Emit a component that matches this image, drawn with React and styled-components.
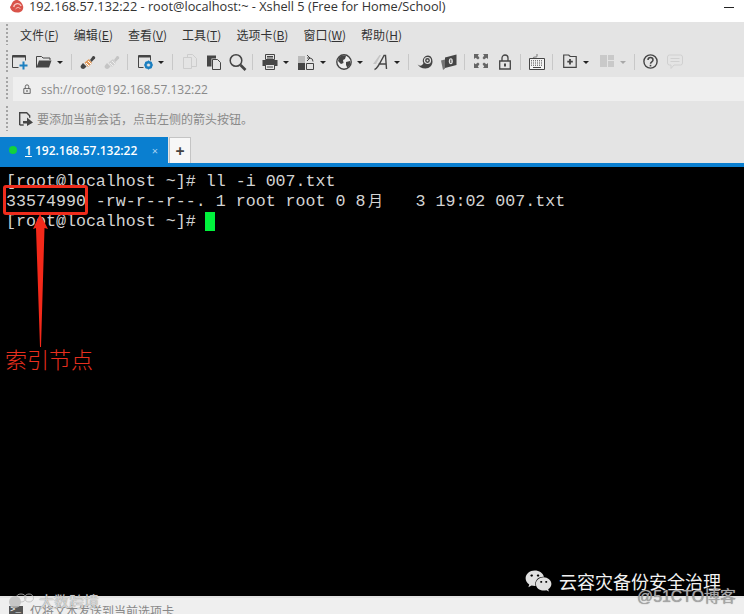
import React from 'react';
import styled, { createGlobalStyle } from 'styled-components';
import { FaWeixin } from 'react-icons/fa';

const ui = `"Open Sans", "Noto Sans CJK SC", sans-serif`;
const cjk = `"Noto Sans CJK SC", "Noto Sans", sans-serif`;
const ink = '#454545';
const blue = '#1b7fc0';

const Global = createGlobalStyle`
	html, body { margin: 0; padding: 0; background: #000; }
	* { box-sizing: border-box; }
`;

// toolbar drawings, all on a 16 box
const icons = {
	newSession: (
		<>
			<path d="M.5 13.5v-12h13v5" fill="none" stroke={ink} />
			<path d="M.5 2h13v1.500H.5z" fill={ink} />
			<path d="M.5 13.5h6" stroke={ink} />
			<path d="M11.5 7.5v8M7.5 11.5h8" stroke={blue} strokeWidth="2" />
		</>
	),
	folder: (
		<>
			<path d="M.5 13.5v-11h5l1.500 1.500h7v2" fill="none" stroke={ink} />
			<path d="M.5 13.5l2.500-7h12.500l-2.500 7z" fill={ink} />
		</>
	),
	connect: (
		<>
			<path d="M10 6l2.500-3.500c1-1.300 3.500.5 2.500 2L11.500 8z" fill={ink} />
			<path d="M4.500 8.500L9 5l3 4-4 4z" fill="#e09a5c" />
			<path d="M6 9l3 3M8 7l3 3" stroke="#fff" />
			<path d="M1 11.500c-1.500 2 1.500 4.500 3.500 3l2-2L3 9z" fill={ink} />
		</>
	),
	disconnect: (
		<>
			<path d="M10 6l2.500-3.500c1-1.300 3.500.5 2.500 2L11.500 8z" fill="#c4c4c4" />
			<path d="M4.500 8.500L9 5l3 4-4 4z" fill="#cfcfcf" />
			<path d="M6 9l3 3M8 7l3 3" stroke="#eee" />
			<path d="M1 11.500c-1.500 2 1.500 4.500 3.500 3l2-2L3 9z" fill="#c4c4c4" />
		</>
	),
	props: (
		<>
			<path d="M.5 13.500v-12h12v5M.5 13.500h5" fill="none" stroke={ink} />
			<path d="M.5 2h12v1.500H.5z" fill={ink} />
			<circle cx="10.500" cy="11" r="3" fill="none" stroke={blue} strokeWidth="2" />
			<path d="M10.500 6.500v9M6 11h9M7.500 8l6 6M13.500 8l-6 6" stroke={blue} strokeWidth="1.200" />
			<circle cx="10.500" cy="11" r="1.500" fill="#e4e4e4" />
		</>
	),
	copy: (
		<>
			<path d="M1.500 3.500h8v11h-8z" fill="none" stroke="#cdcdcd" />
			<path d="M5.500 3V.5h5l4 4v8H10" fill="none" stroke="#cdcdcd" />
		</>
	),
	paste: (
		<>
			<path d="M1 1.500h9v3H5.500v8H1z" fill={ink} />
			<path d="M6.500 5.500h5l3 3v7h-8z" fill="none" stroke={ink} />
		</>
	),
	find: (
		<>
			<circle cx="7" cy="6.500" r="5.800" fill="none" stroke={ink} strokeWidth="1.500" />
			<path d="M11.500 11l5 5" stroke={ink} strokeWidth="2.600" />
		</>
	),
	print: (
		<>
			<path d="M3.500.5h9v5h-9z" fill="none" stroke={ink} />
			<path d="M5 2.500h6M5 4h6" stroke={ink} />
			<path d="M.5 6h15v6H.5z" fill={ink} />
			<path d="M3.500 10.500h9v5h-9z" fill="#e4e4e4" stroke={ink} />
			<path d="M5 13h6" stroke={ink} />
		</>
	),
	transfer: (
		<>
			<path d="M0 2h7v7H0z" fill="#bbb" />
			<path d="M0 9h7v7H0z" fill={ink} />
			<path d="M8.500 9.500h7v6h-7z" fill="none" stroke={ink} />
			<path d="M9 1l3 3-3 3M12 4H9M15 7.500a3.500 3.500 0 0 0-3-3.500" fill="none" stroke={ink} />
		</>
	),
	globe: (
		<>
			<circle cx="8" cy="8" r="7.200" fill="#eee" stroke={ink} strokeWidth="1.400" />
			<path d="M3 3.500c2-2 5-2.500 7-1.500l-1 3-2 1 .5 3L5 10 2 7zM10 8l4-1 .5 3-3 4-1.500-3z" fill={ink} />
		</>
	),
	font: (
		<>
			<path d="M0 10L6.500 1 8 1 3 10z" fill="#c4c4c4" />
			<path d="M1.500 15.500C4 15 6 11 11 1.500h1.500l1 13.500M5.500 10h7.500" fill="none" stroke={ink} strokeWidth="1.400" />
		</>
	),
	shell: (
		<>
			<path d="M.5 10c2 3 5 1.500 6-1C4.500 6.500 7 1.500 11 1.500c3 0 4.500 3 4.500 6 0 4-3 7-7 7-4 0-7-2-8-4.500z" fill={ink} />
			<circle cx="10.500" cy="6.500" r="3" fill="none" stroke="#e4e4e4" strokeWidth="1.200" />
			<circle cx="10.500" cy="6.500" r="1" fill="#e4e4e4" />
		</>
	),
	book: (
		<>
			<path d="M4 3.500l11.500-3v10.500L4 14z" fill={ink} />
			<path d="M0 6.500l4-1v9l-2 1.500z" fill={ink} opacity=".7" />
			<ellipse cx="9.800" cy="7.300" rx="2" ry="3" fill="#e4e4e4" />
			<path d="M9.800 5.500v3.500" stroke={ink} />
		</>
	),
	full: (
		<path d="M0 0h5L3.800 1.600 5.500 4 4 5.500 1.600 3.800 0 5zM14 0H9l1.200 1.600L8.500 4 10 5.500l2.400-1.700L14 5zM0 14h5l-1.200-1.600 1.700-2.400L4 8.500l-2.400 1.700L0 9zM14 14H9l1.200-1.600L8.500 10 10 8.500l2.400 1.700L14 9z" fill="#666" />
	),
	lock: (
		<>
			<path d="M.7 7h10.600v8H.7z" fill="none" stroke={ink} strokeWidth="1.300" />
			<path d="M3 7V4a3 3 0 0 1 6 0v3" fill="none" stroke={ink} strokeWidth="1.300" />
			<path d="M5 9.500h2v3H5z" fill={ink} />
		</>
	),
	keyboard: (
		<>
			<path d="M8 0v2.500c0 1-4 0-4 1.500" fill="none" stroke="#777" />
			<path d="M.5 4.500h15v11H.5z" fill="#f4f4f4" stroke={ink} />
			<path d="M2 6.800h12M2 9h12M2 11.200h12" stroke={ink} strokeDasharray="1 1" />
			<path d="M4 13.500h8" stroke={ink} />
		</>
	),
	newTab: (
		<>
			<path d="M.7 13.300V1h5l1.500 1.500h6v10.800z" fill="none" stroke={ink} strokeWidth="1.200" />
			<path d="M7 5v5.500M4.300 7.700h5.500" stroke={ink} strokeWidth="1.800" />
		</>
	),
	layout: <path d="M0 1h7v12H0zM8 1h6v5H8zM8 7h6v6H8z" fill="#c9c9c9" />,
	help: (
		<>
			<circle cx="7.500" cy="7.500" r="6.600" fill="none" stroke={ink} strokeWidth="1.400" />
			<path d="M5 6c0-3.300 5-3.300 5 0 0 1.800-2.500 1.800-2.500 3.800" fill="none" stroke={ink} strokeWidth="1.500" />
			<path d="M6.700 10.800h1.600v1.600H6.700z" fill={ink} />
		</>
	),
	chat: (
		<>
			<path d="M2.500 1h11a2 2 0 0 1 2 2v6a2 2 0 0 1-2 2H7l-3 3.500V11H2.500a2 2 0 0 1-2-2V3a2 2 0 0 1 2-2z" fill="none" stroke="#d0d0d0" />
			<path d="M3.500 4.500h9M3.500 7.500h9" stroke="#d0d0d0" />
		</>
	),
};

// [kind, width, space before it]
const toolbar = [
	['newSession', 16, 4], ['folder', 16, 8], ['caret', 6, 5], ['sep', 1, 8],
	['connect', 16, 8], ['disconnect', 16, 8], ['sep', 1, 7],
	['props', 15, 10], ['caret', 6, 5], ['sep', 1, 8],
	['copy', 15, 9], ['paste', 15, 9], ['find', 17, 8], ['sep', 1, 6],
	['print', 16, 9], ['caret', 6, 5], ['transfer', 16, 9], ['caret', 6, 6],
	['globe', 16, 10], ['caret', 6, 5], ['font', 17, 10], ['caret', 6, 4], ['sep', 1, 8],
	['shell', 16, 8], ['book', 16, 8], ['sep', 1, 7],
	['full', 14, 9], ['lock', 12, 11], ['sep', 1, 9],
	['keyboard', 16, 8], ['sep', 1, 7],
	['newTab', 14, 10], ['caret', 6, 6], ['layout', 14, 11], ['caretOff', 6, 6], ['sep', 1, 8],
	['help', 15, 8], ['chat', 16, 9],
];

const menu = [
	['文件', 'F'], ['编辑', 'E'], ['查看', 'V'], ['工具', 'T'],
	['选项卡', 'B'], ['窗口', 'W'], ['帮助', 'H'],
];

const App = () => (
	<Window>
		<Global />

		<TitleBar>
			<Logo viewBox="0 0 16 13">
				<path d="M1 7c1 4 4 6 8 6 4 0 7-3 6-7C14 2 10-2 6 0 3 1 3 5 1 7z" fill="#d9534a" />
				<path d="M5 7c1-4 6-5 8-1" fill="none" stroke="#f7c9c3" strokeWidth="1.400" />
				<path d="M7 9c2-2 4-2 5 0" fill="none" stroke="#f7c9c3" />
			</Logo>
			<TitleText>192.168.57.132:22 - root@localhost:~ - Xshell 5 (Free for Home/School)</TitleText>
			<Minimize />
		</TitleBar>

		<MenuBar>
			<Grip />
			{menu.map(([label, key]) => (
				<MenuItem key={key}>{label}(<u>{key}</u>)</MenuItem>
			))}
		</MenuBar>

		<ToolBar>
			<Grip />
			{toolbar.map(([kind, width, gap], i) => {
				if (kind === 'sep') return <ToolSep key={i} $gap={gap} />;
				if (kind === 'caret' || kind === 'caretOff') {
					return <Caret key={i} $gap={gap} $off={kind === 'caretOff'} />;
				}
				return (
					<ToolIcon key={i} $gap={gap} $w={width} viewBox={`0 0 ${width} 16`}>
						{icons[kind]}
					</ToolIcon>
				);
			})}
		</ToolBar>

		<AddressBar>
			<Grip />
			<AddressField>
				<SmallIcon viewBox="0 0 10 12">
					<path d="M1 5.500h8v6H1z" fill="none" stroke={ink} />
					<path d="M2.800 5.500V3a2.200 2.200 0 0 1 4.400 0v2.500" fill="none" stroke={ink} />
					<path d="M4.200 7.500h1.600v2H4.200z" fill={ink} />
				</SmallIcon>
				<AddressText>ssh://root@192.168.57.132:22</AddressText>
			</AddressField>
		</AddressBar>

		<HintBar>
			<Grip />
			<HintIcon viewBox="0 0 14 14">
				<path d="M.7 13V.7h7l3 3v2" fill="none" stroke={ink} strokeWidth="1.400" />
				<path d="M.7 13h4" stroke={ink} strokeWidth="1.400" />
				<path d="M4 9h4V5.500l6 5-6 3.500v-2.500H4z" fill={ink} />
			</HintIcon>
			<HintText>要添加当前会话，点击左侧的箭头按钮。</HintText>
		</HintBar>

		<TabBar>
			<ActiveTab>
				<StatusDot />
				<TabLabel><u>1</u> 192.168.57.132:22</TabLabel>
				<TabClose>×</TabClose>
			</ActiveTab>
			<AddTab>+</AddTab>
		</TabBar>

		<Terminal>
			<Line>[root@localhost ~]# ll -i 007.txt</Line>
			<Line>33574990 -rw-r--r--. 1 root root 0 8<Wide>月</Wide>   3 19:02 007.txt</Line>
			<Line>[root@localhost ~]# <Cursor /></Line>

			<InodeBox />
			<Arrow viewBox="0 0 15 134">
				<path d="M7 0L15 15 11.500 14 8 133 7 133 3 14 0 15z" fill="#f4291a" />
			</Arrow>
			<InodeLabel>索引节点</InodeLabel>

			<ChannelMark>
				<FaWeixin />
				<span>云容灾备份安全治理</span>
			</ChannelMark>
		</Terminal>

		<ComposeBar>
			<ComposeIcon>&gt;_</ComposeIcon>
			<ComposeText>仅将文本发送到当前选项卡</ComposeText>
		</ComposeBar>

		<LeftMark>
			<MarkIcon viewBox="0 0 26 16">
				<ellipse cx="7" cy="9" rx="6" ry="6" fill="#bdbdbd" />
				<ellipse cx="13" cy="5" rx="5" ry="4" fill="none" stroke="#bdbdbd" />
				<ellipse cx="21" cy="5" rx="4.500" ry="4" fill="none" stroke="#bdbdbd" />
			</MarkIcon>
			<span>大数跨境</span>
		</LeftMark>
		<BlogMark>@51CTO博客</BlogMark>
	</Window>
);

const Window = styled.div`
position:relative;
display:flex;
flex-direction:column;
width:744px;
height:614px;
overflow:hidden;
background:#e4e4e4;
font-family:${ui};
`;

const TitleBar = styled.header`
display:flex;
align-items:center;
height:22px;
padding:0 10px 10px 9px;
background:#fff;
`;

const Logo = styled.svg`
flex:none;
width:15px;
height:13px;
`;

const TitleText = styled.span`
margin-left:5px;
font-size:12.75px;
line-height:12px;
color:#333;
white-space:nowrap;
`;

const Minimize = styled.i`
width:10px;
height:1px;
margin-left:auto;
margin-top:2px;
background:#222;
`;

const Grip = styled.i`
flex:none;
width:2px;
margin-left:6px;
align-self:stretch;
background:repeating-linear-gradient(#a4a4a4 0 2px, transparent 2px 4px);
`;

const MenuBar = styled.nav`
display:flex;
align-items:center;
gap:15px;
height:25px;
padding:2px 0;
`;

const MenuItem = styled.span`
font-family:${cjk};
font-size:12px;
color:#333;
white-space:nowrap;

&:first-of-type {
	margin-left:-3px;
}
`;

const ToolBar = styled.div`
display:flex;
align-items:center;
height:30px;
padding:3px 0;
`;

const ToolIcon = styled.svg`
flex:none;
width:${(p) => p.$w}px;
height:16px;
margin-left:${(p) => p.$gap}px;
overflow:visible;
`;

const ToolSep = styled.i`
flex:none;
width:1px;
height:16px;
margin-left:${(p) => p.$gap}px;
background:#c8c8c8;
`;

const Caret = styled.i`
flex:none;
width:0;
height:0;
margin-left:${(p) => p.$gap}px;
border:3px solid transparent;
border-bottom:none;
border-top:3px solid ${(p) => (p.$off ? '#a8a8a8' : '#222')};
`;

const AddressBar = styled.div`
display:flex;
align-items:stretch;
height:24px;
`;

const AddressField = styled.div`
display:flex;
align-items:center;
flex:1;
margin-left:5px;
padding-left:10px;
background:#efefef;
`;

const SmallIcon = styled.svg`
width:8px;
height:10px;
`;

const AddressText = styled.span`
margin-left:10px;
font-size:12px;
color:#8a8a8a;
`;

const HintBar = styled.div`
display:flex;
align-items:center;
height:36px;
padding:5px 0 6px;
`;

const HintIcon = styled.svg`
width:14px;
height:14px;
margin-left:11px;
`;

const HintText = styled.span`
margin-left:4px;
font-family:${cjk};
font-size:12px;
color:#8a8a8a;
`;

const TabBar = styled.div`
display:flex;
height:30px;
border-bottom:4px solid #0a7fd0;
`;

const ActiveTab = styled.div`
display:flex;
align-items:center;
width:168px;
padding-left:9px;
background:#0a7fd0;
color:#fff;
`;

const StatusDot = styled.i`
width:8px;
height:8px;
border-radius:50%;
background:#13d13c;
`;

const TabLabel = styled.span`
margin-left:8px;
font-size:12px;
font-weight:600;
white-space:nowrap;
`;

const TabClose = styled.span`
margin-left:auto;
margin-right:10px;
font-size:11px;
color:#a9d3f0;
`;

const AddTab = styled.div`
display:flex;
align-items:center;
justify-content:center;
width:22px;
margin-left:1px;
background:#f7f7f7;
border:1px solid #c4c4c4;
border-bottom:none;
font-size:16px;
font-weight:700;
color:#444;
`;

const Terminal = styled.main`
position:relative;
flex:1;
padding:5px 6px;
background:#000;
font-family:"Liberation Mono", monospace;
font-size:16.65px;
line-height:20px;
color:#d4d4d4;
`;

const Line = styled.div`
height:20px;
white-space:pre;
`;

const Wide = styled.span`
display:inline-block;
width:20px;
height:16px;
font-family:${cjk};
font-size:15px;
line-height:16px;
text-align:center;
`;

const Cursor = styled.i`
display:inline-block;
width:10px;
height:19px;
margin-left:-1px;
vertical-align:-5px;
background:#00f23c;
`;

const InodeBox = styled.div`
position:absolute;
left:3px;
top:18px;
width:85px;
height:30px;
border:3px solid #ee2c1c;
border-radius:3px;
`;

const Arrow = styled.svg`
position:absolute;
left:33px;
top:47px;
width:15px;
height:134px;
`;

const InodeLabel = styled.span`
position:absolute;
left:5px;
top:177px;
font-family:${cjk};
font-size:22px;
font-weight:300;
line-height:28px;
color:#e8301f;
`;

const ChannelMark = styled.div`
position:absolute;
left:525px;
top:402px;
display:flex;
align-items:center;
gap:7px;
font-family:${cjk};
font-size:18px;
line-height:24px;
color:#f2f2f2;
white-space:nowrap;

svg {
	width:27px;
	height:24px;
	color:#e0e0e0;
}
`;

const ComposeBar = styled.footer`
display:flex;
align-items:flex-start;
height:18px;
padding:8px 0 0 9px;
background:#efefef;
border-top:2px solid #e4e4e4;
overflow:hidden;
`;

const ComposeIcon = styled.span`
flex:none;
width:14px;
height:12px;
padding-left:1px;
background:#555;
font-family:"Liberation Mono", monospace;
font-size:9px;
line-height:9px;
color:#fff;
`;

const ComposeText = styled.span`
margin-left:7px;
margin-top:-3px;
font-family:${cjk};
font-size:12px;
line-height:16px;
color:#888;
white-space:nowrap;
`;

const LeftMark = styled.div`
position:absolute;
left:8px;
top:592px;
display:flex;
align-items:center;
gap:5px;
font-family:${cjk};
font-size:15px;
line-height:18px;
color:rgba(235, 235, 235, 0.8);
text-shadow:0 0 1px rgba(90, 90, 90, 0.9);
`;

const MarkIcon = styled.svg`
width:26px;
height:16px;
opacity:.8;
`;

const BlogMark = styled.span`
position:absolute;
left:637px;
top:587px;
font-family:"Liberation Sans", ${cjk};
font-size:15.9px;
line-height:20px;
color:#a6a6a6;
text-shadow:0 0 1px #777;
white-space:nowrap;
`;

export default App;
